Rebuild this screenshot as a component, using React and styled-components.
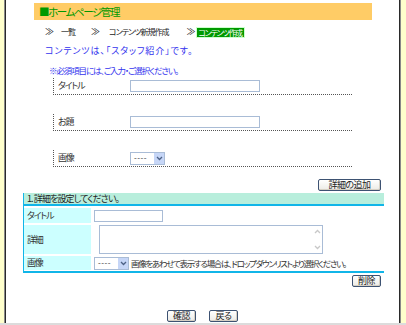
import React from 'react';
import styled, { createGlobalStyle } from 'styled-components';

const GlobalStyle = createGlobalStyle`
    html, body {
        margin: 0;
        padding: 0;
        background: #ffffcc;
    }
    body {
        font-family: "Noto Sans CJK JP", "Noto Sans", sans-serif;
        font-feature-settings: "palt";
    }
`

const Frame = styled.div`
    width: 406px;
    height: 325px;
    box-sizing: border-box;
    padding: 0 5px 0 4px;
    background: #ffffcc;
    border-bottom: 2px solid #dcdcdc;
    display: flex;
`
const Window = styled.div`
    flex: 1;
    background: #ffffff;
    border-left: 1px solid #8a8a8a;
    border-right: 1px solid #8a8a8a;
    box-shadow: inset 1px 0 0 #2a2a2a, inset -1px 0 0 #2a2a2a;
    padding-left: 1px;
    display: flex;
    flex-direction: column;
    font-size: 9px;
    color: #222;
    line-height: 10px;
    white-space: nowrap;
`
const Header = styled.div`
    margin: 3px 28px 0 28px;
    height: 17px;
    background: #ffcc66;
    color: #009900;
    font-size: 10.5px;
    letter-spacing: -1.4px;
    line-height: 17px;
    padding-left: 5px;
`
const Crumbs = styled.div`
    margin: 7px 0 0 39px;
    height: 10px;
    display: flex;
    align-items: center;
`
const Crumb = styled.span`
    margin-right: ${props => props.gap}px;
    font-size: ${props => props.arrow ? 9 : 8}px;
    letter-spacing: ${props => props.arrow ? 0 : -1}px;
`
const CurrentCrumb = styled.span`
    background: #009900;
    color: #fff;
    border: 1px solid #ccffcc;
    padding: 0 2px 0 1px;
    font-size: 8px;
    letter-spacing: -1.3px;
    line-height: 9px;
`
const Note = styled.div`
    margin: ${props => props.top}px 0 0 ${props => props.left}px;
    color: #3333ee;
    height: 10px;
    font-size: ${props => props.size || 9}px;
    letter-spacing: ${props => props.spacing}px;
`
const Form = styled.div`
    margin: 3px 0 0 47px;
    width: 299px;
    display: flex;
    flex-direction: column;
    gap: 19px;
`
const FormRow = styled.div`
    height: 16px;
    border-left: 1px dotted #555;
    border-bottom: 1px dotted #555;
    display: flex;
    align-items: center;
`
const FormLabel = styled.div`
    width: 72px;
    padding-left: 4px;
    color: #333;
    letter-spacing: -1.2px;
`
const TextBox = styled.div`
    width: ${props => props.width}px;
    height: ${props => props.height || 10}px;
    border: 1px solid #a9bcd6;
    background: #fff;
    box-sizing: content-box;
`
const SelectBox = styled.div`
    width: 33px;
    height: 11px;
    border: 1px solid #a9bcd6;
    background: #fff;
    display: flex;
    align-items: center;
    font-size: 8px;
    color: #333;
`
const SelectText = styled.span`
    flex: 1;
    padding-left: 3px;
    letter-spacing: 0.5px;
`
const SelectButton = styled.span`
    width: 10px;
    height: 11px;
    background: #c6d6f7;
    display: flex;
    align-items: center;
    justify-content: center;
`
const ButtonRow = styled.div`
    margin: ${props => props.top}px 0 0 ${props => props.left}px;
    width: ${props => props.width}px;
    display: flex;
    justify-content: ${props => props.align};
    gap: 13px;
`
const Button = styled.div`
    width: ${props => props.width}px;
    height: 10px;
    border: 1px solid #3d5272;
    border-radius: 2px;
    background: linear-gradient(#ffffff, #ecebe6);
    box-shadow: inset -1px -1px 0 #d6d0c4;
    font-size: 9px;
    line-height: 10px;
    letter-spacing: -0.5px;
    text-align: center;
    color: #222;
`
const Section = styled.div`
    margin: 2px 0 0 17px;
    width: 360px;
    border-left: 1px solid #11b5e8;
    border-bottom: 2px solid #11b5e8;
`
const SectionTitle = styled.div`
    height: 11px;
    background: #b8eedc;
    border-bottom: 2px solid #11b5e8;
    padding-left: 3px;
    line-height: 11px;
    letter-spacing: -0.9px;
    color: #222;
`
const Grid = styled.div`
    display: grid;
    grid-template-columns: 67px 1fr;
    gap: 2px;
    padding: 2px 0 1px 0;
`
const Cell = styled.div`
    height: ${props => props.height}px;
    background: ${props => props.label ? '#ccffff' : '#ffffff'};
    padding-left: ${props => props.label ? 3 : 1}px;
    display: flex;
    align-items: center;
    color: #333;
    letter-spacing: ${props => props.label ? -1.2 : 0}px;
`
const TextArea = styled.div`
    margin-left: 5px;
    width: 222px;
    height: 27px;
    border: 1px solid #a9bcd6;
    display: flex;
    justify-content: flex-end;
`
const ScrollBar = styled.div`
    width: 9px;
    display: flex;
    flex-direction: column;
    justify-content: space-between;
    align-items: center;
    padding: 3px 0;
`
const Hint = styled.span`
    margin-left: 2px;
    font-size: 8.5px;
    letter-spacing: -1.3px;
`

const Chevron = ({ up, color }) => (
    <svg width="7" height="5" viewBox="0 0 7 5">
        <path d={up ? "M1 4 L3.5 1.5 L6 4" : "M1 1 L3.5 3.5 L6 1"} fill="none" stroke={color} strokeWidth="1.3" />
    </svg>
)

const Select = () => (
    <SelectBox>
        <SelectText>----</SelectText>
        <SelectButton><Chevron color="#4d6185" /></SelectButton>
    </SelectBox>
)

class App extends React.Component {
    render() {
        return (
            <Frame>
                <GlobalStyle />
                <Window>
                    <Header>■ホームページ管理</Header>
                    <Crumbs>
                        <Crumb arrow gap={7}>≫</Crumb>
                        <Crumb gap={16}>一覧</Crumb>
                        <Crumb arrow gap={9}>≫</Crumb>
                        <Crumb gap={18}>コンテンツ新規作成</Crumb>
                        <Crumb arrow gap={1}>≫</Crumb>
                        <CurrentCrumb>コンテンツ作成</CurrentCrumb>
                    </Crumbs>
                    <Note top={9} left={39} spacing={0.9}>コンテンツは、「スタッフ紹介」です。</Note>
                    <Note top={9} left={43} size={8.5} spacing={-1.1}>※必須項目には、ご入力・ご選択ください。</Note>
                    <Form>
                        <FormRow>
                            <FormLabel>タイトル</FormLabel>
                            <TextBox width={128} />
                        </FormRow>
                        <FormRow>
                            <FormLabel>お題</FormLabel>
                            <TextBox width={128} />
                        </FormRow>
                        <FormRow>
                            <FormLabel>画像</FormLabel>
                            <Select />
                        </FormRow>
                    </Form>
                    <ButtonRow top={12} left={17} width={358} align="flex-end">
                        <Button width={61}>詳細の追加</Button>
                    </ButtonRow>
                    <Section>
                        <SectionTitle>1. 詳細を設定してください。</SectionTitle>
                        <Grid>
                            <Cell label height={15}>タイトル</Cell>
                            <Cell height={15}><TextBox width={67} /></Cell>
                            <Cell label height={29}>詳細</Cell>
                            <Cell height={29}>
                                <TextArea>
                                    <ScrollBar>
                                        <Chevron up color="#c8c8c8" />
                                        <Chevron color="#c8c8c8" />
                                    </ScrollBar>
                                </TextArea>
                            </Cell>
                            <Cell label height={14}>画像</Cell>
                            <Cell height={14}>
                                <Select />
                                <Hint>画像をあわせて表示する場合は、ドロップダウンリストより選択ください。</Hint>
                            </Cell>
                        </Grid>
                    </Section>
                    <ButtonRow top={2} left={17} width={358} align="flex-end">
                        <Button width={27}>削除</Button>
                    </ButtonRow>
                    <ButtonRow top={23} left={0} width={393} align="center">
                        <Button width={27}>確認</Button>
                        <Button width={27}>戻る</Button>
                    </ButtonRow>
                </Window>
            </Frame>
        );
    }
}

export default App;
